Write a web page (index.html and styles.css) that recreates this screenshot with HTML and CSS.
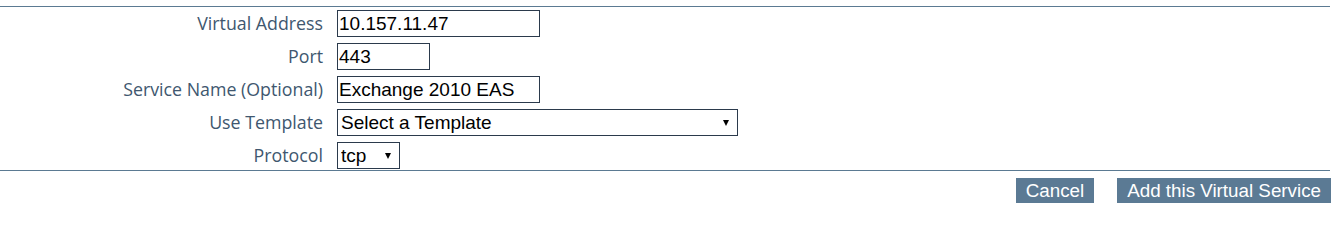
FILE: index.html
```html
<!DOCTYPE html>
<html lang="en">
<head>
<meta charset="utf-8">
<title>Add Virtual Service</title>
<link rel="stylesheet" href="styles.css">
</head>
<body>
<div class="panel">
  <div class="rule"></div>
  <form class="form">
    <label class="lbl" for="vaddr">Virtual Address</label>
    <div class="ctl"><input id="vaddr" class="field w-addr" type="text" value="10.157.11.47"></div>

    <label class="lbl" for="port">Port</label>
    <div class="ctl"><input id="port" class="field w-port" type="text" value="443"></div>

    <label class="lbl" for="sname">Service Name (Optional)</label>
    <div class="ctl"><input id="sname" class="field w-addr" type="text" value="Exchange 2010 EAS"></div>

    <label class="lbl" for="tmpl">Use Template</label>
    <div class="ctl"><span class="sel w-tmpl"><select id="tmpl" class="field"><option>Select a Template</option></select></span></div>

    <label class="lbl" for="proto">Protocol</label>
    <div class="ctl"><span class="sel w-proto"><select id="proto" class="field"><option>tcp</option><option>udp</option></select></span></div>
  </form>
  <div class="rule"></div>
  <div class="actions">
    <button type="button" class="btn">Cancel</button>
    <button type="button" class="btn">Add this Virtual Service</button>
  </div>
</div>
</body>
</html>
```
FILE: styles.css
```css
html, body {
  margin: 0;
  padding: 0;
  background: #ffffff;
}

.panel {
  padding-top: 6px;
  width: 1330px;
}

.rule {
  height: 0;
  border-top: 1px solid #5b7a92;
}

.form {
  display: grid;
  grid-template-columns: 323px auto;
  column-gap: 14px;
  row-gap: 6px;
  margin: 3px 0 1px 0;
  align-items: center;
}

.lbl {
  text-align: right;
  font-family: "Open Sans", "DejaVu Sans", sans-serif;
  font-size: 17.8px;
  color: #40576f;
  line-height: 27px;
  white-space: nowrap;
}

.ctl {
  display: flex;
  align-items: center;
  height: 27px;
}

.field {
  box-sizing: border-box;
  height: 27px;
  margin: 0;
  border: 1px solid #2b3a4c;
  border-radius: 0;
  background: #ffffff;
  color: #000000;
  font-family: "Liberation Sans", Arial, sans-serif;
  font-size: 19px;
  padding: 0 1px;
  outline: none;
}

.w-addr { width: 203px; }
.w-port { width: 93px; }

.sel {
  position: relative;
  display: inline-block;
  height: 27px;
}

.sel select {
  -webkit-appearance: none;
  appearance: none;
  width: 100%;
  padding: 0 18px 0 3px;
}

.sel::after {
  content: "";
  position: absolute;
  top: 11px;
  right: 9px;
  width: 0;
  height: 0;
  border-left: 3px solid transparent;
  border-right: 3px solid transparent;
  border-top: 6px solid #000000;
  pointer-events: none;
}

.w-tmpl { width: 401px; }
.w-proto { width: 63px; }

.actions {
  display: flex;
  justify-content: flex-end;
  gap: 23px;
  margin-top: 7px;
  margin-right: -1px;
}

.btn {
  height: 25px;
  margin: 0;
  padding: 0 10px;
  border: none;
  border-radius: 0;
  background: #5b7a94;
  color: #ffffff;
  font-family: "Liberation Sans", Arial, sans-serif;
  font-size: 18.8px;
  line-height: 25px;
  cursor: pointer;
}
```
